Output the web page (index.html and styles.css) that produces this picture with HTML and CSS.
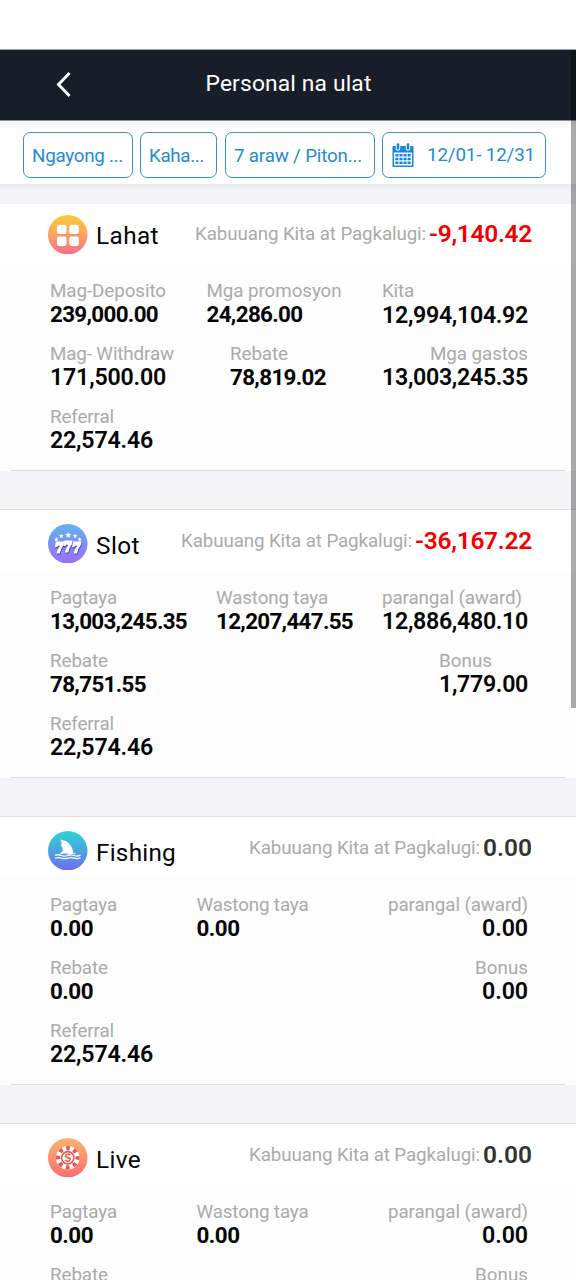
FILE: index.html
```html
<!DOCTYPE html>
<html lang="fil">
<head>
<meta charset="utf-8">
<title>Personal na ulat</title>
<link rel="stylesheet" href="styles.css">
</head>
<body>
<div class="screen">
  <header class="topbar">
    <svg class="back" viewBox="0 0 20 30"><path d="M16.500 4 5.500 15.500 16.500 27" fill="none" stroke="#fff" stroke-width="2.900"/></svg>
    <h1 class="title"><span class="fit" data-w="165">Personal na ulat</span></h1>
  </header>
  <nav class="filters">
    <div class="filter period"><span class="fit" data-w="90">Ngayong ...</span></div>
    <div class="filter day"><span class="fit" data-w="54">Kaha...</span></div>
    <div class="filter range"><span class="fit" data-w="127">7 araw / Piton...</span></div>
    <div class="filter date">
      <svg class="calendar" viewBox="0 0 22 24"><rect x=".5" y="3" width="21" height="21" rx="1" fill="#1687de"/><path d="M6 1.500v4M16 1.500v4" stroke="#fff" stroke-width="4.600" stroke-linecap="round"/><path d="M6 1.500v4M16 1.500v4" stroke="#1687de" stroke-width="2.600" stroke-linecap="round"/><path fill="#fff" d="M2 9.500h18v13H2z"/><path d="M3.300 12.200h16M3.300 16h16M3.300 19.800h16" stroke="#1687de" stroke-width="2.500" stroke-dasharray="3.100 1"/></svg>
      <span class="fit" data-w="107">12/01- 12/31</span>
    </div>
  </nav>
  <main>
    <section class="card first">
      <div class="head">
        <svg class="icon" viewBox="0 0 40 40"><defs><linearGradient id="ga" x2="0" y2="1"><stop stop-color="#fccb36"/><stop offset=".5" stop-color="#fda361"/><stop offset="1" stop-color="#fb6b8c"/></linearGradient></defs><circle cx="20" cy="20" r="20" fill="url(#ga)"/><g fill="#e9705f"><rect x="9" y="10.800" width="9.800" height="9.800" rx="2.500"/><rect x="21.500" y="10.800" width="9.800" height="9.800" rx="2.500"/><rect x="9" y="22.800" width="9.800" height="9.800" rx="2.500"/><rect x="21.500" y="22.800" width="9.800" height="9.800" rx="2.500"/></g><g fill="#fff"><rect x="9" y="9.800" width="9.800" height="9.800" rx="2.500"/><rect x="21.500" y="9.800" width="9.800" height="9.800" rx="2.500"/><rect x="9" y="21.800" width="9.800" height="9.800" rx="2.500"/><rect x="21.500" y="21.800" width="9.800" height="9.800" rx="2.500"/></g></svg>
        <h2 class="name"><span class="fit" data-w="62">Lahat</span></h2>
        <div class="total"><span class="caption fit" data-w="230">Kabuuang Kita at Pagkalugi:</span><b class="loss fit" data-w="102">-9,140.42</b></div>
      </div>
      <div class="body">
        <div class="row">
          <div class="item"><span class="label fit" data-w="115">Mag-Deposito</span><b class="value fit" data-w="107">239,000.00</b></div>
          <div class="item"><span class="label fit" data-w="134">Mga promosyon</span><b class="value fit" data-w="95">24,286.00</b></div>
          <div class="item"><span class="label fit" data-w="31">Kita</span><b class="value big low fit" data-w="145">12,994,104.92</b></div>
        </div>
        <div class="row">
          <div class="item"><span class="label fit" data-w="123">Mag- Withdraw</span><b class="value big fit" data-w="115">171,500.00</b></div>
          <div class="item"><span class="label low fit" data-w="57">Rebate</span><b class="value fit" data-w="95">78,819.02</b></div>
          <div class="item end"><span class="label fit" data-w="97">Mga gastos</span><b class="value big fit" data-w="145">13,003,245.35</b></div>
        </div>
        <div class="row">
          <div class="item"><span class="label fit" data-w="63">Referral</span><b class="value big fit" data-w="102">22,574.46</b></div>
        </div>
      </div>
    </section>

    <section class="card">
      <div class="head">
        <svg class="icon" viewBox="0 0 40 40"><defs><linearGradient id="gb" x2="0" y2="1"><stop stop-color="#61b2ee"/><stop offset="1" stop-color="#986ffa"/></linearGradient><path id="seven" d="M1 0h8.300L8.800 3.500Q5.800 7 5 12H1.500Q2.500 7.500 5.300 4.200H3L2.400 5.500H0z"/><path id="star" d="M0-3 .9-1l2.200.3L1.500.8l.4 2.200L0 2l-1.900 1 .4-2.200L-3.100-.7l2.200-.3z"/></defs><circle cx="20" cy="20" r="20" fill="url(#gb)"/><g fill="#5948bb"><use href="#seven" x="7.500" y="19.200"/><use href="#seven" x="16" y="18.200"/><use href="#seven" x="24.900" y="19.200"/></g><g fill="#fff"><use href="#seven" x="7" y="17.800"/><use href="#seven" x="15.500" y="16.800"/><use href="#seven" x="24.400" y="17.800"/><use href="#star" x="20.500" y="11"/><use href="#star" transform="translate(13.500 12) scale(.75)"/><use href="#star" transform="translate(27.500 12) scale(.75)"/><use href="#star" transform="translate(8.500 15.500) scale(.7)"/><use href="#star" transform="translate(32 15.500) scale(.7)"/></g></svg>
        <h2 class="name"><span class="fit" data-w="43">Slot</span></h2>
        <div class="total"><span class="caption fit" data-w="230">Kabuuang Kita at Pagkalugi:</span><b class="loss fit" data-w="116">-36,167.22</b></div>
      </div>
      <div class="body">
        <div class="row">
          <div class="item"><span class="label fit" data-w="66">Pagtaya</span><b class="value fit" data-w="136">13,003,245.35</b></div>
          <div class="item"><span class="label fit" data-w="111">Wastong taya</span><b class="value fit" data-w="136">12,207,447.55</b></div>
          <div class="item"><span class="label fit" data-w="139">parangal (award)</span><b class="value big fit" data-w="145">12,886,480.10</b></div>
        </div>
        <div class="row">
          <div class="item"><span class="label fit" data-w="57">Rebate</span><b class="value fit" data-w="95">78,751.55</b></div>
          <div class="item"><span class="label fit" data-w="52">Bonus</span><b class="value big fit" data-w="88">1,779.00</b></div>
        </div>
        <div class="row">
          <div class="item"><span class="label fit" data-w="63">Referral</span><b class="value big fit" data-w="102">22,574.46</b></div>
        </div>
      </div>
    </section>

    <section class="card">
      <div class="head">
        <svg class="icon" viewBox="0 0 40 40"><defs><linearGradient id="gc" x2="0" y2="1"><stop stop-color="#2bd4d2"/><stop offset=".5" stop-color="#4aa5df"/><stop offset="1" stop-color="#706cf0"/></linearGradient></defs><circle cx="20" cy="20" r="20" fill="url(#gc)"/><path fill="#fff" d="M12 8.500c8 .5 13 6.500 13.500 13.500q2 .5 3 1.500-4-1-7 .5-3-2-6.500-1-2 1-3-.3 3.500-2 3-5-1.500 0-.5-2-2 0-1-2 1-2-1.500-5.200z"/><path d="M7 24.500q3.200-1 6.500.3t6.500 0 6.500 0 6.500-.3M7 27.500q3.200-1 6.500 0t6.500 0 6.500 0 6.500-.3" fill="none" stroke="#fff" stroke-width="1.300"/></svg>
        <h2 class="name"><span class="fit" data-w="79">Fishing</span></h2>
        <div class="total"><span class="caption fit" data-w="230">Kabuuang Kita at Pagkalugi:</span><b class="zero fit" data-w="48">0.00</b></div>
      </div>
      <div class="body">
        <div class="row">
          <div class="item"><span class="label fit" data-w="66">Pagtaya</span><b class="value fit" data-w="42">0.00</b></div>
          <div class="item"><span class="label fit" data-w="111">Wastong taya</span><b class="value fit" data-w="42">0.00</b></div>
          <div class="item end"><span class="label fit" data-w="139">parangal (award)</span><b class="value big fit" data-w="45">0.00</b></div>
        </div>
        <div class="row">
          <div class="item"><span class="label fit" data-w="57">Rebate</span><b class="value fit" data-w="42">0.00</b></div>
          <div class="item end"><span class="label fit" data-w="52">Bonus</span><b class="value big fit" data-w="45">0.00</b></div>
        </div>
        <div class="row">
          <div class="item"><span class="label fit" data-w="63">Referral</span><b class="value big fit" data-w="102">22,574.46</b></div>
        </div>
      </div>
    </section>

    <section class="card">
      <div class="head">
        <svg class="icon" viewBox="0 0 40 40"><defs><linearGradient id="gd" x2="0" y2="1"><stop stop-color="#f9b56d"/><stop offset="1" stop-color="#fd6c70"/></linearGradient></defs><circle cx="20" cy="20" r="20" fill="url(#gd)"/><circle cx="20" cy="20" r="12" fill="#fff"/><circle cx="20" cy="20" r="9.800" fill="none" stroke="#ee554e" stroke-width="4.200" stroke-dasharray="3.800 3.897" stroke-dashoffset="1.900"/><circle cx="20" cy="20" r="6.200" fill="#fff" stroke="#ee554e" stroke-width="1.600"/><path d="M22.500 17.300q-1-1.200-3-.8-2.200.6-1.500 2.200.4.900 2.100 1.200 2.500.4 2.300 2-.3 1.600-2.500 1.600-1.700 0-2.700-1.200" fill="none" stroke="#ee5e48" stroke-width="1.700"/></svg>
        <h2 class="name"><span class="fit" data-w="44">Live</span></h2>
        <div class="total"><span class="caption fit" data-w="230">Kabuuang Kita at Pagkalugi:</span><b class="zero fit" data-w="48">0.00</b></div>
      </div>
      <div class="body">
        <div class="row">
          <div class="item"><span class="label fit" data-w="66">Pagtaya</span><b class="value fit" data-w="42">0.00</b></div>
          <div class="item"><span class="label fit" data-w="111">Wastong taya</span><b class="value fit" data-w="42">0.00</b></div>
          <div class="item end"><span class="label fit" data-w="139">parangal (award)</span><b class="value big fit" data-w="45">0.00</b></div>
        </div>
        <div class="row">
          <div class="item"><span class="label fit" data-w="57">Rebate</span></div>
          <div class="item end"><span class="label fit" data-w="52">Bonus</span></div>
        </div>
      </div>
    </section>
  </main>
  <div class="scrollbar"></div>
</div>
<script src="fit.js"></script>
</body>
</html>
```

FILE: fit.js
```js
// Spreads each text run to the width given in its data-w attribute.
document.querySelectorAll('.fit').forEach(function (el) {
  var natural = el.getBoundingClientRect().width;
  var gap = (Number(el.dataset.w) + 1 - natural) / el.textContent.length;
  el.style.letterSpacing = gap.toFixed(3) + 'px';
});
```

FILE: styles.css
```css
* { box-sizing: border-box; }
body { margin: 0; background: #fff; font-family: Roboto, sans-serif; }
.screen { position: relative; height: 1280px; overflow: hidden; padding-top: 50px; background: #fff; }
.topbar { display: grid; grid-template-columns: 85px 1fr 85px; align-items: center; height: 71px; background: #171e29; border-bottom: 1px solid #8d9197; box-shadow: 0 -1px 0 #a0a3a7; }
.back { width: 20px; height: 30px; margin-left: 53px; margin-top: -2px; }
.title { margin: 0; padding-left: 1px; padding-bottom: 3px; text-align: center; color: #fff; font-size: 22.800px; font-weight: 400; line-height: 30px; white-space: nowrap; }
.filters { display: flex; align-items: flex-start; gap: 8px; height: 63px; padding: 11px 30px 0 23px; background: linear-gradient(#f1f2f4, #fff 9px); }
.filter { display: flex; align-items: center; height: 46px; padding: 2px 0 0 8px; border: 1px solid #3890d3; border-radius: 7px; background: #fff; color: #268bd5; font-size: 18.800px; white-space: nowrap; }
.period { width: 110px; margin-right: -1px; }
.day { width: 77px; }
.range { width: 150px; margin-right: -1px; }
.date { width: 164px; padding: 0 0 0 9px; gap: 13px; }
.calendar { width: 22px; height: 24px; }
main { display: flex; flex-direction: column; gap: 38px; padding-top: 20px; background: #f3f3f8; box-shadow: inset 0 8px 8px -8px #dcdde1; }
.card { height: 269px; border-top: 1px solid #e0e0e3; background: linear-gradient(#dcdce0, #dcdce0) 50% 100% / 554px 1px no-repeat, #fdfdfd; }
.card.first { height: 267px; border-top: 0; }
.head { display: flex; align-items: center; height: 61px; padding: 6px 44px 0 48px; background: #fff; }
.first .head { padding-top: 0; }
.icon { width: 39.500px; height: 39.500px; flex: none; }
.name { margin: 0; padding: 5px 0 0 8.500px; font-size: 24.300px; line-height: 30px; font-weight: 400; color: #050505; white-space: nowrap; }
.first .name { padding-top: 2px; }
.total { display: flex; align-items: center; gap: 3px; margin-left: auto; margin-top: -6px; white-space: nowrap; }
.first .total { margin-top: -2px; }
.caption { color: #aaa; font-size: 18.800px; line-height: 24px; padding-top: 1px; }
.loss, .zero { font-size: 24.500px; line-height: 28px; font-weight: 600; }
.loss { color: #f40000; }
.zero { color: #333; }
.body { padding: 15px 48px 0 50px; }
.first .body { padding-top: 14px; }
.row { display: flex; justify-content: space-between; height: 63px; }
.item { display: flex; flex-direction: column; align-items: flex-start; white-space: nowrap; }
.item.end { align-items: flex-end; }
.label { color: #aaa; font-size: 18.800px; line-height: 24px; height: 23px; }
.value { color: #050505; font-size: 22.400px; line-height: 24px; height: 24px; font-weight: 700; }
.value.big { font-size: 23.200px; font-weight: 600; }
.value.low { padding-top: 1px; }
.scrollbar { position: absolute; top: 50px; right: 0; width: 5px; height: 658px; background: rgba(0, 0, 0, .33); }
```
